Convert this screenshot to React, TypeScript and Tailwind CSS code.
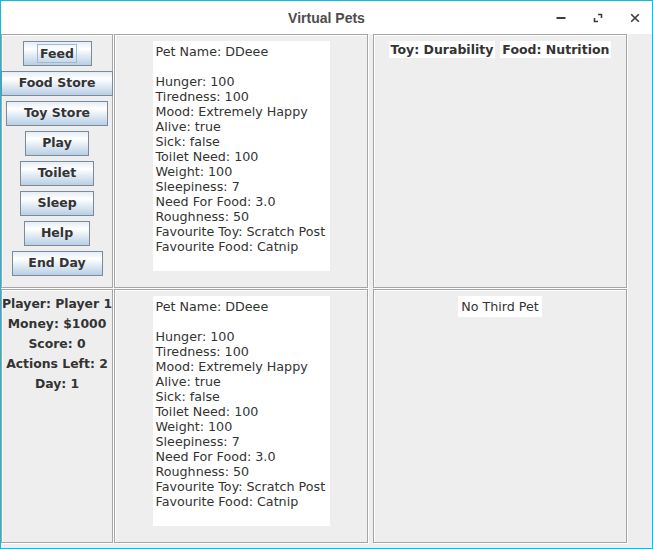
import React from 'react';

const FONT = { fontFamily: '"DejaVu Sans", Verdana, sans-serif' };

const PET_LINES = [
  'Pet Name: DDeee',
  '',
  'Hunger: 100',
  'Tiredness: 100',
  'Mood: Extremely Happy',
  'Alive: true',
  'Sick: false',
  'Toilet Need: 100',
  'Weight: 100',
  'Sleepiness: 7',
  'Need For Food: 3.0',
  'Roughness: 50',
  'Favourite Toy: Scratch Post',
  'Favourite Food: Catnip',
  '',
];

const BUTTONS = [
  { label: 'Feed', w: 'w-[69px]', focus: true },
  { label: 'Food Store', w: 'w-[112px]' },
  { label: 'Toy Store', w: 'w-[102px]' },
  { label: 'Play', w: 'w-[64px]' },
  { label: 'Toilet', w: 'w-[74px]' },
  { label: 'Sleep', w: 'w-[74px]' },
  { label: 'Help', w: 'w-[66px]' },
  { label: 'End Day', w: 'w-[91px]' },
];

const STATS = ['Player: Player 1', 'Money: $1000', 'Score: 0', 'Actions Left: 2', 'Day: 1'];

// etched border: grey rect, white one offset by a pixel
const Panel: React.FC<{ className?: string; children?: React.ReactNode }> = ({ className = '', children }) => (
  <div className={`h-[254px] border border-[#a5a5a5] shadow-[inset_1px_1px_0_#ffffff,1px_1px_0_#ffffff] ${className}`}>
    {children}
  </div>
);

const SwingButton: React.FC<{ label: string; w: string; focus?: boolean }> = ({ label, w, focus }) => (
  <button
    className={`${w} h-[25px] shrink-0 flex items-center justify-center border border-[#7a8a99] bg-[linear-gradient(to_bottom,#e4edf6_0%,#ffffff_30%,#dbe6f1_65%,#b8cfe5_100%)] text-[12.5px] font-bold text-[#333333]`}
  >
    <span className={focus ? 'px-[2px] leading-[17px] border border-[#a3b8cc]' : ''}>{label}</span>
  </button>
);

const PetCard: React.FC = () => (
  <div className="w-[177px] bg-white pl-[3px] pt-[3px] pb-[2px] text-[12.7px] leading-[15px] text-[#333333] whitespace-pre">
    {PET_LINES.map((line, i) => (
      <div key={i} className="h-[15px]">{line}</div>
    ))}
  </div>
);

export default function App() {
  return (
    <div className="w-[653px] h-[549px] border border-[#14b8e6] bg-white flex flex-col overflow-hidden" style={FONT}>
      {/* title bar */}
      <div className="relative h-[33px] shrink-0 flex items-center justify-center bg-white">
        <span className="text-[14px] font-bold text-[#4d4d4d] mt-[1px]" style={{ fontFamily: '"Liberation Sans", Arial, sans-serif' }}>
          Virtual Pets
        </span>
        <div className="absolute right-0 top-0 h-full flex items-center">
          <svg width="10" height="10" viewBox="0 0 10 10" className="absolute left-[-96px] top-[12px]">
            <rect x="0.5" y="4" width="9" height="2" fill="#3c3c3c" />
          </svg>
          <svg width="10" height="10" viewBox="0 0 10 10" className="absolute left-[-59px] top-[12px]">
            <path d="M5 1.5h3.5V5 M1.5 5v3.5H5" stroke="#3c3c3c" strokeWidth="1.6" fill="none" />
          </svg>
          <svg width="10" height="10" viewBox="0 0 10 10" className="absolute left-[-22px] top-[12px]">
            <path d="M1.2 1.2l7.6 7.6M8.8 1.2l-7.6 7.6" stroke="#3c3c3c" strokeWidth="1.6" fill="none" />
          </svg>
        </div>
      </div>

      {/* content */}
      <div className="flex-1 bg-[#eeeeee] flex flex-col gap-[1px]">
        <div className="flex">
          <Panel className="w-[112px] flex flex-col items-center gap-[5px] pt-[6px]">
            {BUTTONS.map((b) => (
              <SwingButton key={b.label} label={b.label} w={b.w} focus={b.focus} />
            ))}
          </Panel>
          <Panel className="w-[254px] ml-[1px] flex justify-center pt-[6px]">
            <div className="h-fit">
              <PetCard />
            </div>
          </Panel>
          <Panel className="w-[254px] ml-[5px] flex justify-center items-start gap-[5px] pt-[6px]">
            <span className="bg-white h-[17px] px-[2px] leading-[17px] text-[12.5px] font-bold text-[#333333]">Toy: Durability</span>
            <span className="bg-white h-[17px] px-[2px] leading-[17px] text-[12.5px] font-bold text-[#333333]">Food: Nutrition</span>
          </Panel>
        </div>
        <div className="flex">
          <Panel className="w-[112px] flex flex-col items-center pt-[4px]">
            {STATS.map((s) => (
              <div key={s} className="h-[20px] leading-[20px] text-[12.4px] font-bold text-[#333333] whitespace-nowrap">{s}</div>
            ))}
          </Panel>
          <Panel className="w-[254px] ml-[1px] flex justify-center pt-[6px]">
            <div className="h-fit">
              <PetCard />
            </div>
          </Panel>
          <Panel className="w-[254px] ml-[5px] flex justify-center items-start pt-[6px]">
            <span className="bg-white h-[21px] px-[3px] leading-[21px] text-[12.7px] text-[#333333]">No Third Pet</span>
          </Panel>
        </div>
      </div>
    </div>
  );
}
